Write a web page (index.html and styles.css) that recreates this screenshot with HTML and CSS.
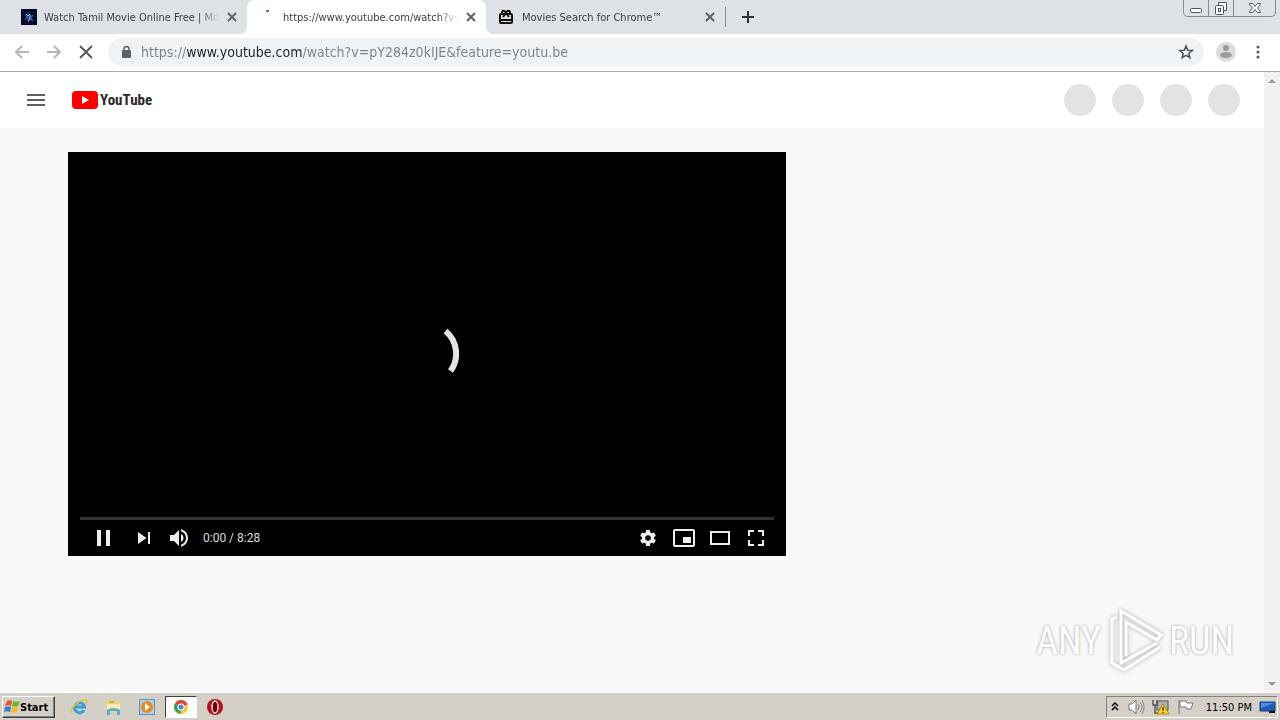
FILE: index.html
```
<!DOCTYPE html>
<html lang="en">

<head>
    <meta charset="UTF-8">
    <meta name="viewport" content="width=device-width, initial-scale=1.0">
    <title>YouTube</title>
    <link rel="stylesheet" href="styles.css">
</head>

<body>
    <!-- Tabs -->
    <div class="tabStrip">
        <div class="tab">
            <svg class="tabIcon" viewBox="0 0 16 16">
                <rect width="16" height="16" fill="#060a2c" />
                <path d="M3 4l3 2 2-3 1 4 4-2-2 4 2 4-4-2-2 3-1-4-3 1 2-3z" fill="#2b4a86" />
                <path d="M5 5l2 2 2-2v5l-2 2" fill="none" stroke="#8fb0dc" />
            </svg>
            <span class="tabTitle">Watch Tamil Movie Online Free | Mov</span>
            <button class="tabClose" aria-label="Close tab"><svg viewBox="0 0 12 12"><path d="M2 2l8 8M10 2l-8 8" /></svg></button>
        </div>
        <div class="tab active">
            <svg class="tabIcon" viewBox="0 0 16 16"><path d="M6 2h3" stroke="#4a78c8" stroke-width="2" /></svg>
            <span class="tabTitle">https://www.youtube.com/watch?v=</span>
            <button class="tabClose" aria-label="Close tab"><svg viewBox="0 0 12 12"><path d="M2 2l8 8M10 2l-8 8" /></svg></button>
        </div>
        <div class="tab">
            <svg class="tabIcon" viewBox="0 0 16 16" fill="none" stroke="#111" stroke-width="2">
                <rect x="1" y="5" width="12" height="9" rx="1" />
                <path d="M1 11h12M7 4L4 8M7 4l3 4" />
                <path d="M7 4C6 1 3 1 3 4M7 4c1-3 4-3 4 0" />
            </svg>
            <span class="tabTitle">Movies Search for Chrome™</span>
            <button class="tabClose" aria-label="Close tab"><svg viewBox="0 0 12 12"><path d="M2 2l8 8M10 2l-8 8" /></svg></button>
        </div>
        <button class="newTab" aria-label="New tab"><svg viewBox="0 0 14 14"><path d="M7 1v12M1 7h12" /></svg></button>
        <div class="windowButtons">
            <button aria-label="Minimize"><svg viewBox="0 0 24 16"><rect x="6.500" y="8.500" width="11" height="4" rx="1" /></svg></button>
            <button aria-label="Restore"><svg viewBox="0 0 24 16"><path d="M9.500 5.500v-3h8v8h-3" /><rect x="6.500" y="5.500" width="8" height="9" rx="1" /><rect x="9.500" y="8.500" width="2" height="3" /></svg></button>
            <button class="wide" aria-label="Close"><svg viewBox="0 0 24 16"><path d="M6.500 3.500h3l2.500 3 2.500-3h3v1l-3 3.500 3 3.500v1h-3l-2.500-3-2.500 3h-3v-1l3-3.500-3-3.500z" /></svg></button>
        </div>
    </div>

    <!-- Toolbar -->
    <div class="toolbar">
        <button class="toolButton dim" aria-label="Back"><svg viewBox="0 0 20 20"><path d="M17 10H4M10 4l-6 6 6 6" /></svg></button>
        <button class="toolButton dim" aria-label="Forward"><svg viewBox="0 0 20 20"><path d="M3 10h13M10 4l6 6-6 6" /></svg></button>
        <button class="toolButton" aria-label="Stop"><svg viewBox="0 0 20 20"><path d="M4 4l12 12M16 4L4 16" /></svg></button>
        <div class="addressBar">
            <svg class="lock" viewBox="0 0 12 14"><rect x="2" y="5" width="9" height="8" rx="1" fill="#5f6368" /><path d="M4 6V4a2.500 2.500 0 0 1 5 0v2" fill="none" stroke="#5f6368" stroke-width="1.500" /></svg>
            <input type="text" class="address" aria-label="Address" value="https://www.youtube.com/watch?v=pY284z0kIJE&amp;feature=youtu.be">
            <button class="star" aria-label="Bookmark"><svg viewBox="0 0 16 16"><path d="M8 2l1.700 4.200 4.500.3-3.500 2.900 1.200 4.300L8 11.300l-3.900 2.400 1.200-4.300-3.500-2.900 4.500-.3z" /></svg></button>
        </div>
        <button class="toolButton" aria-label="Profile">
            <svg viewBox="0 0 20 20" class="profile"><circle cx="10" cy="10" r="10" fill="#dcdcdc" /><circle cx="10" cy="6" r="3" fill="#9b9b9b" /><ellipse cx="10" cy="13" rx="6" ry="3" fill="#9b9b9b" /></svg>
        </button>
        <button class="toolButton" aria-label="Menu">
            <svg viewBox="0 0 20 20" class="dots"><circle cx="10" cy="5" r="1.500" /><circle cx="10" cy="10" r="1.500" /><circle cx="10" cy="15" r="1.500" /></svg>
        </button>
    </div>

    <div class="viewport">
        <div class="page">
            <header class="masthead">
                <button class="guide" aria-label="Guide"><svg viewBox="0 0 24 24"><path d="M3 7h18M3 12h18M3 17h18" /></svg></button>
                <a href="#" class="logo">
                    <svg viewBox="0 0 26 18"><rect width="26" height="18" rx="4" fill="#f00" /><path d="M10 5l7 4-7 4z" fill="#fff" /></svg>
                    <span>YouTube</span>
                </a>
                <div class="placeholders">
                    <span></span><span></span><span></span><span></span>
                </div>
            </header>

            <main class="watch">
                <div class="player">
                    <div class="screen">
                        <svg class="spinner" viewBox="0 0 64 64"><path d="M50.500 9A29.500 29.500 0 0 1 55.500 49" /></svg>
                    </div>
                    <input type="range" class="seek" min="0" max="508" value="0" aria-label="Seek">
                    <div class="controls">
                        <button class="play" aria-label="Pause"><svg viewBox="0 0 36 36"><path d="M12 26h4V10h-4zM21 26h4V10h-4z" /></svg></button>
                        <button aria-label="Next"><svg viewBox="0 0 36 36"><path d="M12 24l8.500-6L12 12zM22 12v12h2V12z" /></svg></button>
                        <button aria-label="Mute"><svg viewBox="0 0 36 36"><path d="M8 21h4l5 5V10l-5 5H8zM19 14v8c1.480-.68 2.500-2.230 2.500-4s-1.020-3.260-2.500-4zM19 11.290c2.890.86 5 3.540 5 6.710s-2.110 5.850-5 6.710v2.060c4.010-.91 7-4.490 7-8.770s-2.990-7.860-7-8.770z" /></svg></button>
                        <span class="time">0:00 / 8:28</span>
                        <button aria-label="Settings"><svg viewBox="0 0 36 36"><path fill-rule="evenodd" d="m23.940 18.780c.03-.25.05-.51.05-.78s-.02-.52-.05-.78l1.680-1.320c.15-.12.19-.33.09-.51l-1.600-2.760c-.09-.17-.31-.24-.48-.17l-1.990.8c-.41-.32-.86-.58-1.350-.78l-.3-2.120c-.02-.19-.19-.33-.39-.33h-3.200c-.2 0-.36.14-.39.33l-.3 2.120c-.48.2-.93.47-1.350.78l-1.990-.8c-.18-.07-.39 0-.48.17l-1.600 2.760c-.1.17-.05.39.09.51l1.680 1.320c-.03.25-.05.52-.05.78s.02.52.05.78l-1.680 1.320c-.15.12-.19.33-.09.51l1.600 2.760c.09.17.31.24.48.17l1.990-.8c.41.32.86.58 1.350.78l.3 2.120c.02.19.19.33.39.33h3.200c.2 0 .36-.14.39-.33l.3-2.120c.48-.2.93-.47 1.350-.78l1.990.8c.18.07.39 0 .48-.17l1.600-2.760c.09-.17.05-.39-.09-.51zM18 20.800a2.800 2.800 0 1 1 0-5.600 2.800 2.800 0 0 1 0 5.600z" /></svg></button>
                        <button aria-label="Miniplayer"><svg viewBox="0 0 36 36"><path fill-rule="evenodd" d="M25 17h-8v6h8zM29 25V11a2 2 0 0 0-2-2H9a2 2 0 0 0-2 2v14a2 2 0 0 0 2 2h18a2 2 0 0 0 2-2zM27 25H9V11h18z" /></svg></button>
                        <button aria-label="Theater mode"><svg viewBox="0 0 36 36"><path fill-rule="evenodd" d="M28 11v14H8V11zM10 13v10h16V13z" /></svg></button>
                        <button aria-label="Full screen"><svg viewBox="0 0 36 36"><path d="M10 16h2v-4h4v-2h-6zM20 10v2h4v4h2v-6zM24 24h-4v2h6v-6h-2zM12 20h-2v6h6v-2h-4z" /></svg></button>
                    </div>
                </div>
            </main>
        </div>

        <div class="scrollBar">
            <svg viewBox="0 0 16 16"><path d="M4 11l4-4 4 4z" /></svg>
            <svg viewBox="0 0 16 16"><path d="M4 6l4 4 4-4z" /></svg>
        </div>

        <div class="watermark">
            <span>ANY</span>
            <svg viewBox="0 0 60 66">
                <path d="M21 48V14l31 18 4-5L16 3v52l36-20M12 9L7 11v44l12 7 36-23" />
            </svg>
            <span>RUN</span>
        </div>
    </div>

    <!-- Taskbar -->
    <div class="taskbar">
        <button class="start">
            <svg viewBox="0 0 16 16">
                <path d="M3 2c2-1 3-1 5 0L7 7C5 6 4 6 1 7z" fill="#e8562a" />
                <path d="M9 2c2 1 4 1 7 0l-2 5c-2 1-4 1-6 0z" fill="#6fb52c" />
                <path d="M1 8c2-1 4-1 6 0l-1 5c-2-1-4-1-6 0z" fill="#2f7fd6" />
                <path d="M8 8c2 1 3 1 6 0l-1 5c-2 1-4 1-6 0z" fill="#f7b91c" />
            </svg>
            Start
        </button>
        <div class="tasks">
            <button aria-label="Internet Explorer"><svg viewBox="0 0 18 18"><path d="M14 12a5 5 0 1 1 .5-3H5" fill="none" stroke="#35a0dc" stroke-width="3" /><path d="M2 15C-1 12 8 2 15 2c3 0 1 4 0 4" fill="none" stroke="#e6bd3c" stroke-width="1.500" /></svg></button>
            <button aria-label="Explorer"><svg viewBox="0 0 18 18"><path d="M2 2h6l1 2h7v11H2z" fill="#f1d372" /><path d="M3 6h13v5H3z" fill="#f9eab0" /><path d="M3 17v-5q6-4 13 0v5h-3v-4H6v4z" fill="#54ade0" /><path d="M5 4h5" stroke="#4fae58" /></svg></button>
            <button aria-label="Media Player"><svg viewBox="0 0 18 18"><rect x="1.500" y="1.500" width="15" height="15" fill="#a8d1ef" stroke="#5797ca" /><circle cx="9" cy="9" r="6" fill="#ee8a18" /><path d="M7 5l5 4-5 4z" fill="#fff" /></svg></button>
            <button class="pressed" aria-label="Chrome"><svg viewBox="0 0 18 18"><circle cx="9" cy="9" r="7" fill="#f8c52c" /><path d="M9 9L3 5.500A7 7 0 0 1 15.500 6.500z" fill="#df4436" /><path d="M9 9L3 5.500A7 7 0 0 0 8.500 16z" fill="#34a353" /><circle cx="9" cy="9" r="3.500" fill="#fff" /><circle cx="9" cy="9" r="2.500" fill="#4285f4" /></svg></button>
            <button aria-label="Opera"><svg viewBox="0 0 18 18"><circle cx="9" cy="9" r="8" fill="#b31217" /><ellipse cx="9" cy="9" rx="3" ry="6" fill="#6d0508" stroke="#f3dada" stroke-width="1.500" /></svg></button>
        </div>
        <div class="tray">
            <svg class="chevrons" viewBox="0 0 10 18"><path d="M2 8l3-3 3 3M2 12l3-3 3 3" fill="none" stroke="#000" stroke-width="1.500" /></svg>
            <svg viewBox="0 0 18 18"><path d="M2 6h3l4-4v14l-4-4H2z" fill="#fff" stroke="#777" /><path d="M11 6q2 3 0 6M13 4q4 5 0 10M15 2q4 7 0 14" fill="none" stroke="#888" /></svg>
            <svg viewBox="0 0 18 18"><rect x="5" y="3" width="11" height="9" fill="#a9b2bb" stroke="#555" /><path d="M1 2v5h4V2M3 7v8h6" fill="none" stroke="#555" stroke-width="1.500" /><path d="M11 6l6 10H5z" fill="#ffd51f" stroke="#ae8b00" /><path d="M11 9v4M11 14v1" stroke="#000" /></svg>
            <svg viewBox="0 0 18 18"><path d="M2 2v14M3 3h6l1 2h6l-2 6h-4l-1-2H3z" fill="#fff" stroke="#777" /></svg>
            <span class="clock">11:50 PM</span>
            <svg viewBox="0 0 18 18"><path d="M1 4h15v9H1z" fill="#1d5fb8" stroke="#174079" /><path d="M2 5h13l-13 5z" fill="#4d91dd" /><path d="M10 14h6" stroke="#111" stroke-width="2" /></svg>
        </div>
    </div>
</body>

</html>
```
FILE: styles.css
```
* {
    box-sizing: border-box;
}

body {
    margin: 0;
    height: 100vh;
    display: flex;
    flex-direction: column;
    overflow: hidden;
    font-family: "DejaVu Sans Condensed", "Noto Sans", sans-serif;
    font-size: 11px;
    color: #3c4043;
}

button {
    padding: 0;
    border: 0;
    background: transparent;
    font: inherit;
    color: inherit;
}

svg {
    display: block;
}

/* tabs */
.tabStrip {
    flex: none;
    display: flex;
    height: 34px;
    padding-left: 8px;
    background-color: #dee1e6;
}

.tab {
    display: flex;
    align-items: center;
    flex: 0 1 239px;
    min-width: 0;
    gap: 7px;
    padding: 0 9px 0 13px;
}

.tab.active {
    position: relative;
    background-color: #fff;
    border-radius: 8px 8px 0 0;
}

.tab.active::before,
.tab.active::after {
    content: "";
    position: absolute;
    bottom: 0;
    width: 8px;
    height: 8px;
}

.tab.active::before {
    right: 100%;
    background: radial-gradient(circle at 0 0, transparent 8px, #fff 8px);
}

.tab.active::after {
    left: 100%;
    background: radial-gradient(circle at 100% 0, transparent 8px, #fff 8px);
}

.tabIcon {
    flex: none;
    width: 16px;
    height: 16px;
}

.tabTitle {
    flex: 1;
    overflow: hidden;
    white-space: nowrap;
    -webkit-mask-image: linear-gradient(to left, transparent, #000 20px);
    mask-image: linear-gradient(to left, transparent, #000 20px);
}

.tabClose svg {
    width: 12px;
    height: 12px;
    stroke: #5f6368;
    stroke-width: 2;
}

.newTab {
    align-self: center;
    height: 20px;
    padding: 0 15px;
    border-left: 1px solid #868b90;
}

.newTab svg {
    width: 14px;
    height: 14px;
    stroke: #2d3033;
    stroke-width: 2;
}

.windowButtons {
    display: flex;
    height: 17px;
    margin: 0 4px 0 auto;
    border: 1px solid #858a93;
    border-top: 0;
    border-radius: 0 0 5px 5px;
}

.windowButtons button {
    width: 25px;
    border-right: 1px solid #858a93;
}

.windowButtons .wide {
    width: 41px;
    border-right: 0;
}

.windowButtons svg {
    width: 24px;
    height: 16px;
    margin: 0 auto;
    fill: #fff;
    stroke: #4d535e;
}

/* toolbar */
.toolbar {
    flex: none;
    display: flex;
    align-items: center;
    gap: 12px;
    height: 38px;
    padding: 0 12px 2px;
    border-bottom: 1px solid #aaa;
    background-color: #fff;
}

.toolButton svg {
    width: 20px;
    height: 20px;
    fill: none;
    stroke: #55585c;
    stroke-width: 2;
}

.toolButton.dim svg {
    stroke: #b4b6b8;
}

.toolButton .profile {
    stroke: none;
}

.toolButton .dots {
    fill: #55585c;
    stroke: none;
}

.addressBar {
    flex: 1;
    display: flex;
    align-items: center;
    height: 28px;
    padding: 0 10px 0 12px;
    border-radius: 14px;
    background-color: #f0f3f5;
}

.lock {
    width: 12px;
    height: 14px;
    margin-right: 9px;
}

/* the host part of the address is darker than the rest */
.address {
    flex: 1;
    min-width: 0;
    padding: 0;
    border: 0;
    outline: 0;
    font-family: "DejaVu Sans Condensed", "Noto Sans", sans-serif;
    font-size: 14px;
    color: transparent;
    background: linear-gradient(to right, #7b8085 46px, #202124 46px, #202124 161px, #7b8085 161px);
    -webkit-background-clip: text;
    background-clip: text;
}

.star svg {
    width: 16px;
    height: 16px;
    fill: none;
    stroke: #4f5357;
    stroke-width: 1.5;
}

/* youtube page */
.viewport {
    position: relative;
    flex: 1;
    min-height: 0;
    display: flex;
}

.page {
    flex: 1;
    overflow: hidden;
    background-color: #f8f8f8;
}

.masthead {
    display: flex;
    align-items: center;
    gap: 24px;
    height: 56px;
    padding: 0 24px;
    background-color: #fff;
}

.guide svg {
    width: 24px;
    height: 24px;
    stroke: #606060;
    stroke-width: 2;
}

.logo {
    display: flex;
    align-items: center;
    gap: 2px;
    font-family: "Roboto Condensed", Roboto, sans-serif;
    font-size: 15px;
    font-weight: bold;
    color: #282828;
    text-decoration: none;
}

.logo svg {
    width: 26px;
    height: 18px;
}

.placeholders {
    display: flex;
    gap: 16px;
    margin-left: auto;
}

.placeholders span {
    width: 32px;
    height: 32px;
    border-radius: 50%;
    background-color: #e3e3e3;
}

.watch {
    display: grid;
    grid-template-columns: minmax(0, 1fr) 386px;
    gap: 24px;
    padding: 24px 68px;
}

.player {
    display: flex;
    flex-direction: column;
    aspect-ratio: 16 / 9;
    padding: 0 12px;
    background-color: #000;
}

.screen {
    position: relative;
    flex: 1;
}

.spinner {
    position: absolute;
    top: calc(50% + 20px);
    left: 50%;
    width: 64px;
    height: 64px;
    margin: -32px;
    fill: none;
    stroke: #e4e4e4;
    stroke-width: 6;
}

.seek {
    -webkit-appearance: none;
    appearance: none;
    width: 100%;
    height: 3px;
    margin: 0;
    background-color: #333;
}

.seek::-webkit-slider-thumb {
    -webkit-appearance: none;
    width: 0;
    height: 0;
}

.controls {
    display: flex;
    align-items: center;
    height: 36px;
}

.controls svg {
    width: 36px;
    height: 36px;
    margin: 0 auto;
    fill: #eee;
}

.controls .play {
    width: 46px;
}

.time {
    margin: 0 auto 0 5px;
    font-family: Roboto, sans-serif;
    font-size: 12px;
    color: #ddd;
}

.scrollBar {
    display: flex;
    flex-direction: column;
    justify-content: space-between;
    width: 16px;
    background-color: #f1f1f1;
}

.scrollBar svg {
    width: 16px;
    height: 16px;
    fill: #999;
}

.watermark {
    position: absolute;
    right: 46px;
    bottom: 18px;
    display: flex;
    align-items: center;
    gap: 4px;
    font-family: "Roboto Condensed", Roboto, sans-serif;
    font-size: 38px;
    color: #fff;
    text-shadow: 0 0 3px #999;
}

.watermark svg {
    width: 60px;
    height: 66px;
    fill: none;
    stroke: #fff;
    stroke-width: 3;
    filter: drop-shadow(0 0 2px #aaa);
}

/* taskbar */
.taskbar {
    flex: none;
    display: flex;
    height: 28px;
    padding: 3px 2px 2px;
    border-top: 1px solid #fff;
    background-color: #d4cfc7;
    color: #000;
}

.start {
    display: flex;
    align-items: center;
    width: 53px;
    padding-left: 1px;
    border: 1px solid;
    border-color: #fff #404040 #404040 #fff;
    box-shadow: inset -1px -1px #808080;
    font-weight: bold;
}

.start svg {
    width: 16px;
    height: 16px;
}

.tasks {
    display: flex;
    gap: 2px;
    margin-left: 8px;
}

.tasks button {
    width: 32px;
}

.tasks .pressed {
    border: 1px solid;
    border-color: #404040 #fff #fff #404040;
    background-color: #fff;
}

.tasks svg {
    width: 18px;
    height: 18px;
    margin: 0 auto;
}

.tray {
    display: flex;
    align-items: center;
    gap: 7px;
    margin-left: auto;
    padding-left: 3px;
    border: 1px solid;
    border-color: #808080 #fff #fff #808080;
}

.tray svg {
    width: 18px;
    height: 18px;
}

.tray .chevrons {
    width: 10px;
}

.clock {
    margin-left: 4px;
}
```
